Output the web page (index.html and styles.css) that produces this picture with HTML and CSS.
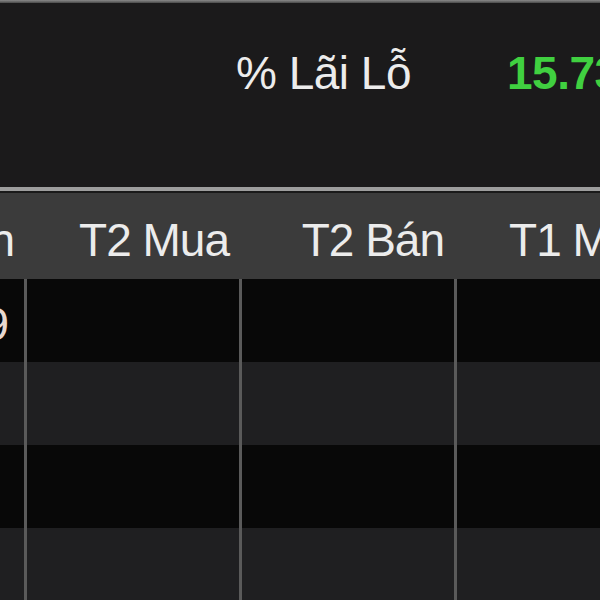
FILE: index.html
```html
<!DOCTYPE html>
<html lang="vi">
<head>
    <meta charset="UTF-8">
    <meta name="viewport" content="width=device-width, initial-scale=1.0">
    <title>Bảng giá - Lãi Lỗ</title>
    <link rel="stylesheet" href="styles.css">
</head>
<body>
    <div class="topline"></div>

    <div class="summary">
        <span class="summary-label">% Lãi Lỗ</span>
        <span class="summary-value">15.73%</span>
    </div>

    <div class="separator"></div>

    <div class="board">
        <div class="row head">
            <div class="cell">T3 Bán</div>
            <div class="cell">T2 Mua</div>
            <div class="cell">T2 Bán</div>
            <div class="cell">T1 Mua</div>
        </div>
        <div class="row odd">
            <div class="cell mark">9</div>
            <div class="cell"></div>
            <div class="cell"></div>
            <div class="cell"></div>
        </div>
        <div class="row even">
            <div class="cell"></div>
            <div class="cell"></div>
            <div class="cell"></div>
            <div class="cell"></div>
        </div>
        <div class="row odd">
            <div class="cell"></div>
            <div class="cell"></div>
            <div class="cell"></div>
            <div class="cell"></div>
        </div>
        <div class="row even">
            <div class="cell"></div>
            <div class="cell"></div>
            <div class="cell"></div>
            <div class="cell"></div>
        </div>
    </div>
</body>
</html>
```

FILE: styles.css
```css
* {
    margin: 0;
    padding: 0;
    box-sizing: border-box;
    font-family: "Liberation Sans", Arial, sans-serif;
}

body {
    background: #1b1a1b;
    width: 600px;
    height: 600px;
    overflow: hidden;
}

.topline {
    height: 3px;
    background: linear-gradient(#8a8a8a, #4a4a4a);
}

.summary {
    height: 184px;
    display: flex;
    padding-top: 47px;
    padding-left: 236px;
    gap: 96px;
    white-space: nowrap;
    font-size: 46px;
    line-height: 46px;
    letter-spacing: -0.5px;
}

.summary-label {
    color: #ececec;
}

.summary-value {
    color: #40d040;
    font-weight: bold;
}

.separator {
    height: 6px;
    background: #9d9d9d;
    border-bottom: 2px solid #1a1a1a;
}

.board {
    margin-left: -188px;
}

.row {
    display: flex;
    height: 83px;
}

.cell {
    flex: 0 0 215px;
    border-right: 3px solid #5a5a5a;
    text-align: right;
    padding-right: 10px;
    color: #ececec;
    font-size: 46px;
    line-height: 46px;
    letter-spacing: -1px;
    white-space: nowrap;
}

.head {
    height: 86px;
    background: #3b3b3b;
}

.head .cell {
    border-right-color: #3b3b3b;
    padding-top: 24px;
}

.odd {
    background: #080808;
}

.even {
    background: #1f1f21;
}

.mark {
    padding-right: 16px;
    padding-top: 22px;
    color: #e9d8cf;
}
```
